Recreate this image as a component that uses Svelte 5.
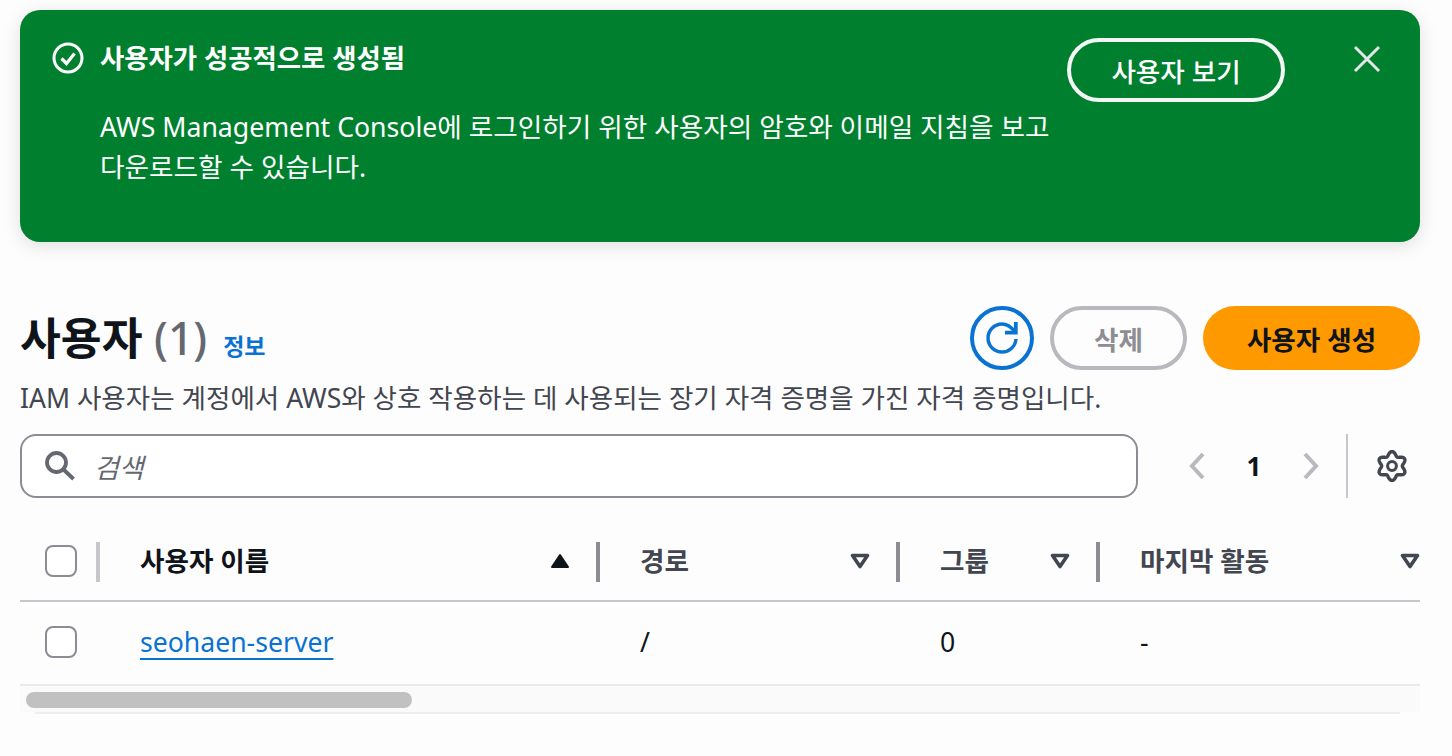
<script lang="ts">
  const columns = [
    { label: '사용자 이름', width: 500, sorted: true },
    { label: '경로', width: 300, sorted: false },
    { label: '그룹', width: 200, sorted: false },
    { label: '마지막 활동', width: 322, sorted: false, last: true }
  ];

  // wavy outline for the preferences gear, six lobes
  function gearPath(): string {
    const pts: string[] = [];
    for (let i = 0; i < 120; i++) {
      const a = (i / 120) * Math.PI * 2;
      const r = 12.4 + 2.1 * Math.cos(6 * (a + Math.PI / 2));
      pts.push(`${(16 + r * Math.cos(a)).toFixed(2)} ${(16 + r * Math.sin(a)).toFixed(2)}`);
    }
    return 'M' + pts.join('L') + 'Z';
  }
</script>

<div class="page">
  <div class="flash">
    <svg class="flash-icon" viewBox="0 0 32 32" width="32" height="32" fill="none" stroke="#fff" stroke-width="3">
      <circle cx="16" cy="16" r="14"/>
      <path d="M9.5 16.5l5 5 8-10" stroke-width="3.2"/>
    </svg>
    <div class="flash-body">
      <div class="flash-title">사용자가 성공적으로 생성됨</div>
      <div class="flash-text">AWS Management Console에 로그인하기 위한 사용자의 암호와 이메일 지침을 보고 다운로드할 수 있습니다.</div>
    </div>
    <button type="button" class="flash-btn">사용자 보기</button>
    <svg class="flash-close" viewBox="0 0 28 28" width="28" height="28" fill="none" stroke="#e4e7e5" stroke-width="3">
      <path d="M2 2l24 24M26 2L2 26"/>
    </svg>
  </div>

  <div class="head">
    <div class="head-left">
      <h1>사용자 <span class="count">(1)</span></h1>
      <span class="info">정보</span>
    </div>
    <div class="head-actions">
      <button type="button" class="refresh" aria-label="새로 고침">
        <svg viewBox="0 0 32 32" width="32" height="32" fill="none" stroke="#0972d3" stroke-width="3.4">
          <path d="M30 17A14 14 0 1 1 16 2Q23 2 28.5 9.5"/>
          <path d="M29.8 0v10.6H19" stroke-width="3.8"/>
        </svg>
      </button>
      <button type="button" class="btn-disabled">삭제</button>
      <button type="button" class="btn-primary">사용자 생성</button>
    </div>
  </div>
  <p class="desc">IAM 사용자는 계정에서 AWS와 상호 작용하는 데 사용되는 장기 자격 증명을 가진 자격 증명입니다.</p>

  <div class="tools">
    <div class="search">
      <svg viewBox="0 0 32 32" width="32" height="32" fill="none" stroke="#656871" stroke-width="3.8">
        <circle cx="12.5" cy="12.5" r="9.5"/>
        <path d="M19.5 19.5l10 9.5"/>
      </svg>
      <span class="placeholder">검색</span>
    </div>
    <div class="pager">
      <svg viewBox="0 0 18 28" width="18" height="28" fill="none" stroke="#b8b8bf" stroke-width="4"><path d="M15 2L4 14l11 12"/></svg>
      <span class="page-num">1</span>
      <svg viewBox="0 0 18 28" width="18" height="28" fill="none" stroke="#b8b8bf" stroke-width="4"><path d="M3 2l11 12L3 26"/></svg>
    </div>
    <div class="prefs">
      <svg viewBox="0 0 32 32" width="32" height="32" fill="none" stroke="#424650" stroke-width="3.4" stroke-linejoin="round">
        <path d={gearPath()}/>
        <circle cx="16" cy="16" r="4.4" stroke-width="3"/>
      </svg>
    </div>
  </div>

  <div class="table">
    <div class="row header">
      <div class="cell-check"><span class="checkbox"></span><span class="sep light"></span></div>
      {#each columns as col}
        <div class="col" class:sorted={col.sorted} style="width: {col.width}px">
          <span class="col-label">{col.label}</span>
          <svg class="caret" viewBox="0 0 20 16" width="20" height="16">
            {#if col.sorted}
              <path d="M10 2L18 14H2z" fill="#0f141a" stroke="#0f141a" stroke-width="2" stroke-linejoin="round"/>
            {:else}
              <path d="M2.5 2.5h15L10 13.5z" fill="none" stroke="#424650" stroke-width="3.6" stroke-linejoin="round"/>
            {/if}
          </svg>
          {#if !col.last}<span class="sep"></span>{/if}
        </div>
      {/each}
    </div>
    <div class="row body">
      <div class="cell-check"><span class="checkbox"></span></div>
      <div class="cell" style="width: 500px"><a href="#top" class="user-link">seohaen-server</a></div>
      <div class="cell" style="width: 300px">/</div>
      <div class="cell" style="width: 200px">0</div>
      <div class="cell" style="width: 322px">-</div>
    </div>
    <div class="scroll">
      <div class="thumb"></div>
    </div>
    <div class="scroll-line"></div>
  </div>
</div>

<style>
  :global(body) {
    background: #fdfdfd;
    font-family: "Noto Sans", "Noto Sans CJK KR", sans-serif;
    color: #0f141a;
  }
  .page {
    width: 1400px;
    padding: 10px 0 0 20px;
  }

  .flash {
    display: flex;
    align-items: flex-start;
    height: 232px;
    box-sizing: border-box;
    padding: 32px 38px 0 32px;
    background: #00802f;
    border-radius: 20px;
    box-shadow: 0 4px 18px rgba(0, 7, 22, 0.12);
    color: #fff;
  }
  .flash-icon { flex-shrink: 0; margin-right: 16px; }
  .flash-body { width: 955px; flex-shrink: 0; }
  .flash-title {
    font-size: 26.4px;
    font-weight: 700;
    line-height: 32px;
    margin-bottom: 33px;
  }
  .flash-text {
    font-size: 26.65px;
    line-height: 40px;
  }
  .flash-btn {
    width: 218px;
    height: 64px;
    margin: -4px 0 0 12px;
    flex-shrink: 0;
    background: transparent;
    border: 4px solid #f4f6f5;
    border-radius: 32px;
    color: #fff;
    font: 500 26.6px "Noto Sans", "Noto Sans CJK KR", sans-serif;
  }
  .flash-close { margin: 3px 0 0 68px; flex-shrink: 0; }

  .head {
    display: flex;
    justify-content: space-between;
    align-items: center;
    margin-top: 64px;
    height: 64px;
  }
  .head-left { display: flex; align-items: baseline; gap: 16px; }
  h1 {
    margin: 0;
    font-size: 44.4px;
    font-weight: 700;
    line-height: 63px;
  }
  .count { font-weight: 500; color: #656871; }
  .info { font-size: 23px; font-weight: 700; color: #0972d3; }
  .head-actions { display: flex; gap: 16px; }
  .refresh {
    width: 64px;
    height: 64px;
    padding: 0;
    display: flex;
    align-items: center;
    justify-content: center;
    background: transparent;
    border: 4px solid #0972d3;
    border-radius: 50%;
  }
  .refresh svg { overflow: visible; }
  .btn-disabled, .btn-primary {
    height: 64px;
    border-radius: 32px;
    font: 700 26.6px "Noto Sans", "Noto Sans CJK KR", sans-serif;
  }
  .btn-disabled {
    width: 137px;
    background: transparent;
    border: 4px solid #b8b8bf;
    color: #8d8d94;
  }
  .btn-primary {
    width: 217px;
    background: #ff9900;
    border: none;
    color: #0f141a;
  }
  .desc {
    margin: 0;
    padding-top: 10px;
    font-size: 26.55px;
    line-height: 36px;
    color: #424650;
  }

  .tools {
    display: flex;
    align-items: center;
    margin-top: 18px;
    height: 64px;
  }
  .search {
    width: 1118px;
    height: 64px;
    box-sizing: border-box;
    display: flex;
    align-items: center;
    gap: 18px;
    padding-left: 22px;
    background: #fff;
    border: 2px solid #8c8c94;
    border-radius: 16px;
  }
  .placeholder { font-size: 27px; font-style: italic; color: #656871; }
  .pager {
    display: flex;
    align-items: center;
    margin-left: 50px;
    width: 132px;
    justify-content: space-between;
  }
  .page-num { font-size: 26px; font-weight: 700; }
  .prefs {
    display: flex;
    align-items: center;
    height: 64px;
    margin-left: 26px;
    padding-left: 28px;
    border-left: 2px solid #c6c6cd;
  }

  .table { margin-top: 32px; }
  .row { display: flex; box-sizing: border-box; }
  .header { height: 72px; border-bottom: 2px solid #c6c6cd; }
  .body { height: 84px; padding-bottom: 2px; border-bottom: 2px solid #e9ebed; font-size: 26.6px; align-items: center; }
  .cell-check {
    width: 78px;
    flex-shrink: 0;
    display: flex;
    align-items: center;
    position: relative;
    box-sizing: border-box;
    padding-left: 25px;
  }
  .header .cell-check { padding-bottom: 8px; }
  .checkbox {
    width: 32px;
    height: 32px;
    box-sizing: border-box;
    background: #fff;
    border: 2px solid #8c8c94;
    border-radius: 8px;
  }
  .sep {
    position: absolute;
    right: -2px;
    top: 12px;
    width: 4px;
    height: 40px;
    background: #8c8c94;
  }
  .sep.light { background: #c6c6cd; }
  .col {
    position: relative;
    flex-shrink: 0;
    box-sizing: border-box;
    display: flex;
    align-items: center;
    justify-content: space-between;
    padding: 0 28px 8px 42px;
    font-size: 26.6px;
    font-weight: 700;
    color: #424650;
  }
  .col-label { margin-bottom: 4px; }
  .col.sorted { color: #0f141a; }
  .col:last-child { padding-right: 0; }
  .cell { box-sizing: border-box; padding-left: 42px; flex-shrink: 0; }
  .user-link {
    color: #0972d3;
    text-decoration: underline;
    text-underline-offset: 6px;
    text-decoration-thickness: 2px;
  }
  .scroll {
    height: 26px;
    box-sizing: border-box;
    padding: 6px 0 0 6px;
    background: #fafafa;
  }
  .thumb { width: 386px; height: 16px; border-radius: 8px; background: #c1c1c1; }
  .scroll-line { height: 2px; margin: 0 20px 0 15px; background: #eeeeee; }
</style>
